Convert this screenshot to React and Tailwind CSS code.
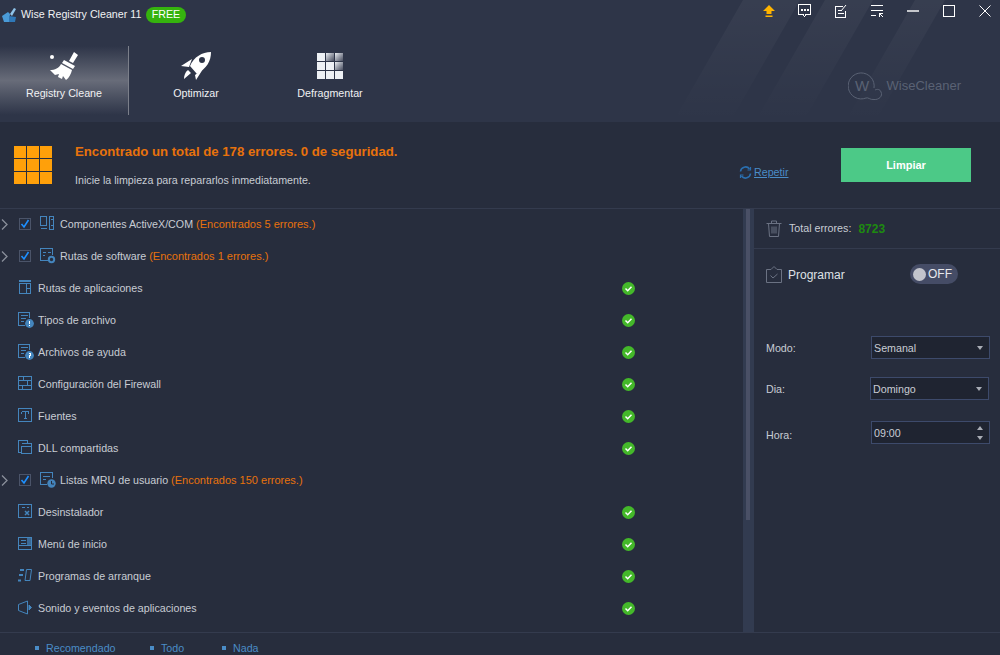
import React from 'react';

const BLUE = '#4485bd';

const Base = ({ children }) => (
  <svg width="16" height="16" viewBox="0 0 16 16" fill="none" stroke={BLUE} strokeWidth="1" shapeRendering="crispEdges">
    {children}
  </svg>
);

const Badge = ({ mark }) => (
  <>
    <circle cx="11.5" cy="11.5" r="4.4" fill={BLUE} stroke="none" shapeRendering="auto" />
    {mark === '!' && <path d="M11.5 9v3M11.5 13v1" stroke="#fff" />}
    {mark === '?' && <path d="M10.5 9.5h2v2h-1v1M11.5 13v1" stroke="#fff" />}
  </>
);

const icons = {
  activex: () => (
    <Base>
      <path d="M.5 .5h6v9h-6zM.5 12.500h6M9.500 .5h4v13h-4zM10.500 3.500h2M10.500 9.500h2" />
    </Base>
  ),
  software: () => (
    <svg width="16" height="16" viewBox="0 0 16 16" fill="none" stroke={BLUE}>
      <path d="M8 12.500H.5v-12h12V7M2.500 4.500h3M7.500 4.500h3M2.500 7.500h2" shapeRendering="crispEdges" />
      <circle cx="11.500" cy="11.500" r="2.700" strokeWidth="2" />
    </svg>
  ),
  app: () => (
    <Base>
      <path d="M1 .5h12M1 1.500h12M1.500 3.500h11v10h-11zM8.500 3.500v10M8.500 8.500h4" />
    </Base>
  ),
  file: () => (
    <Base>
      <path d="M7 13.500H.5v-13h11V6M2.500 3.500h7M2.500 6.500h5M2.500 9.500h3" />
      <Badge mark="!" />
    </Base>
  ),
  help: () => (
    <Base>
      <path d="M7 13.500H.5v-13h11V6M2.500 3.500h7M2.500 6.500h5M2.500 9.500h3" />
      <Badge mark="?" />
    </Base>
  ),
  firewall: () => (
    <Base>
      <path d="M.5 .5h13v13H.5zM.5 4.500h13M.5 9.500h13M5.500 .5v4M9.500 4.500v5M4.500 9.500v4" />
    </Base>
  ),
  font: () => (
    <Base>
      <path d="M.5 .5h13v13H.5zM3.500 3.500h7M3.500 3.500v2M10.500 3.500v2M7 3.500v7M5.500 10.500h3" />
    </Base>
  ),
  dll: () => (
    <Base>
      <path d="M.5 8V.5h9V3M3.500 3.500h10v7M3.500 6.500h10v7H3.500zM.5 8v4.500h3" />
    </Base>
  ),
  mru: () => (
    <svg width="16" height="16" viewBox="0 0 16 16" fill="none" stroke={BLUE}>
      <path d="M7 12.500H.5v-12h12V6M2.500 4.500h7M2.500 7.500h3" shapeRendering="crispEdges" />
      <circle cx="11.500" cy="11.500" r="4.200" fill={BLUE} stroke="none" />
      <path d="M11.500 9v3h2.500" stroke="#272d3d" />
    </svg>
  ),
  uninstall: () => (
    <Base>
      <path d="M.5 .5h13v13H.5zM3.500 3.500h3M8.500 3.500h2" />
      <path d="M7 7l4 4M11 7l-4 4" strokeWidth="1.500" shapeRendering="auto" />
    </Base>
  ),
  start: () => (
    <Base>
      <path d="M.5 1.500h13v12H.5zM.5 9.500h13M2.500 4.500h5M2.500 7h5" />
      <rect x="9" y="2" width="4" height="7" fill={BLUE} stroke="none" opacity="0.7" />
    </Base>
  ),
  boot: () => (
    <svg width="16" height="16" viewBox="0 0 16 16" fill="none" stroke={BLUE}>
      <path d="M2 2h4M1 7h4M0 12.500h3" strokeWidth="2" />
      <path d="M8.500 1.500h5l-1.500 11H7z" />
    </svg>
  ),
  sound: () => (
    <svg width="16" height="16" viewBox="0 0 16 16" fill="none" stroke={BLUE}>
      <path d="M.5 4.500l9-3.500v13l-9-3.500z" />
      <path d="M11 5l2.500 2.500-2.500 2.500z" fill={BLUE} />
    </svg>
  ),
};

const items = [
  { id: 'activex', label: 'Componentes ActiveX/COM', found: 5 },
  { id: 'software', label: 'Rutas de software', found: 1 },
  { id: 'app', label: 'Rutas de aplicaciones' },
  { id: 'file', label: 'Tipos de archivo' },
  { id: 'help', label: 'Archivos de ayuda' },
  { id: 'firewall', label: 'Configuración del Firewall' },
  { id: 'font', label: 'Fuentes' },
  { id: 'dll', label: 'DLL compartidas' },
  { id: 'mru', label: 'Listas MRU de usuario', found: 150 },
  { id: 'uninstall', label: 'Desinstalador' },
  { id: 'start', label: 'Menú de inicio' },
  { id: 'boot', label: 'Programas de arranque' },
  { id: 'sound', label: 'Sonido y eventos de aplicaciones' },
];

const GreenCheck = () => (
  <svg width="13" height="13" viewBox="0 0 13 13">
    <circle cx="6.500" cy="6.500" r="6.500" fill="#44b82a" />
    <path d="M3.500 6.500l2.200 2.200 3.800-4" fill="none" stroke="#fff" strokeWidth="1.500" />
  </svg>
);

const Row = ({ item }) => {
  const Icon = icons[item.id];
  if (item.found) {
    return (
      <div className="h-8 flex items-center">
        <svg width="8" height="11" viewBox="0 0 8 11" fill="none" stroke="#8a8f9b" strokeWidth="1.300" className="ml-[1px]">
          <path d="M1 .5l5 5-5 5" />
        </svg>
        <div className="ml-[10px] w-[12px] h-[12px] border border-[#4b5469] flex items-center justify-center">
          <svg width="10" height="10" viewBox="0 0 10 10">
            <path d="M1.500 5l2.500 3 4.500-7" fill="none" stroke="#1e90ff" strokeWidth="1.600" />
          </svg>
        </div>
        <div className="ml-[9px] w-[16px] flex"><Icon /></div>
        <span className="ml-[4px] text-[#c8ccd4]">{item.label}</span>
        <span className="ml-[3px] text-[11px] text-[#e8720c]">(Encontrados {item.found} errores.)</span>
      </div>
    );
  }
  return (
    <div className="h-8 flex items-center pl-[18px]">
      <div className="w-[16px] flex"><Icon /></div>
      <span className="ml-[4px] w-[584px] text-[#c8ccd4]">{item.label}</span>
      <GreenCheck />
    </div>
  );
};

const FooterLink = ({ children, className }) => (
  <span className={`flex items-center text-[#4a8cc7] ${className}`}>
    <span className="w-1 h-1 bg-[#4a8cc7] mr-[7px]" />
    {children}
  </span>
);

const Arrow = ({ up }) => (
  <svg width="6" height="4" viewBox="0 0 6 4">
    <path d={up ? 'M3 0l3 4H0z' : 'M0 0h6L3 4z'} fill="#a9adb6" />
  </svg>
);

const SelectBox = ({ label, value, className, labelClass = '', spin }) => (
  <div className={`flex items-center ${className}`}>
    <span className={`w-[105px] pt-[1px] text-[#c8ccd4] ${labelClass}`}>{label}</span>
    <div className="w-[119px] h-[23px] bg-[#1f2431] border border-[#3d4a6b] flex items-center justify-between pl-[2px] pr-[6px] text-[#c8ccd4]">
      <span className="pt-[1px]">{value}</span>
      {spin ? (
        <span className="flex flex-col gap-[6px]"><Arrow up /><Arrow /></span>
      ) : (
        <Arrow />
      )}
    </div>
  </div>
);

const WinButton = ({ children }) => (
  <div className="w-[36px] flex items-center justify-center">{children}</div>
);

export default function App() {
  return (
    <div className="w-[1000px] h-[655px] overflow-hidden bg-[#272d3d] flex flex-col text-[10.7px] font-['Liberation_Sans',sans-serif]">
      <header className="relative h-[122px] shrink-0 bg-[#2e3548] overflow-hidden">
        <svg className="absolute inset-0" width="1000" height="122" viewBox="0 0 1000 122">
          <defs>
            <linearGradient id="streak" x1="0" y1="0" x2="0" y2="1">
              <stop offset="0" stopColor="#fff" stopOpacity="0.045" />
              <stop offset="1" stopColor="#fff" stopOpacity="0" />
            </linearGradient>
          </defs>
          <path d="M743 0h57l-70 122h-57zM825 0h48l-70 122h-48zM915 0h30l-70 122h-30z" fill="url(#streak)" />
        </svg>

        <div className="relative h-[29px] flex items-center">
          <svg className="ml-[1px]" width="16" height="16" viewBox="0 0 16 16">
            <path d="M1 9l6-4 2 2-1 8H3z" fill="#4a9bd8" />
            <path d="M9 7l4-6 2 1-4 7z" fill="#8fc4ea" />
            <path d="M8 9l7 1-1 5H8z" fill="#2f78b8" />
          </svg>
          <span className="ml-[4px] w-[125px] text-[#f0f1f3]">Wise Registry Cleaner 11</span>
          <span className="h-[16px] w-[40px] rounded-full bg-[#35b30e] text-white flex items-center justify-center">FREE</span>
          <div className="ml-auto mr-[-3px] mt-[-7px] flex items-center">
            <WinButton>
              <svg width="14" height="14" viewBox="0 0 14 14">
                <path d="M7 1l6 6H9.500v3h-5V7H1zM3.500 11.500h7V13h-7z" fill="#ffb400" />
              </svg>
            </WinButton>
            <WinButton>
              <svg width="14" height="14" viewBox="0 0 14 14" fill="none" stroke="#fff" shapeRendering="crispEdges">
                <path d="M.5 .5h12v10H8l-1.500 2-1.500-2H.5z" />
                <path d="M3 5h2v2H3zM6 5h2v2H6zM9 5h2v2H9z" fill="#fff" stroke="none" />
              </svg>
            </WinButton>
            <WinButton>
              <svg width="14" height="14" viewBox="0 0 14 14" fill="none" stroke="#fff" shapeRendering="crispEdges">
                <path d="M9 2.500H1.500v11h10V7M3.500 6.500h4M3.500 9.500h6" />
                <path d="M7 7l5-6" shapeRendering="auto" />
              </svg>
            </WinButton>
            <WinButton>
              <svg width="14" height="14" viewBox="0 0 14 14" fill="none" stroke="#fff" shapeRendering="crispEdges">
                <path d="M1 1.500h12M1 6.500h12M1 11.500h5M9 9h4M9 9v4M10 10l3 3" />
              </svg>
            </WinButton>
            <WinButton><div className="w-[12px] h-[2px] bg-[#c4c6cb]" /></WinButton>
            <WinButton><div className="w-[12px] h-[12px] border border-white" /></WinButton>
            <WinButton>
              <svg width="12" height="12" viewBox="0 0 12 12" fill="none" stroke="#fff">
                <path d="M.5 .5l11 11M11.500 .5l-11 11" />
              </svg>
            </WinButton>
          </div>
        </div>

        <nav className="relative flex mt-[17px] h-[69px]">
          <div className="w-[129px] border-r border-[#7b7f8a] bg-gradient-to-b from-[#2e3548] via-[#686c79] to-[#2e3548] flex flex-col items-center pt-[5px]">
            <svg width="32" height="30" viewBox="0 0 32 30" fill="#fff">
              <circle cx="4" cy="6" r="2" />
              <path d="M26 1l4 3-5 8-4-2zM16 9l11 6-2 3-11-6zM13 13l11 6c-1 4-3 8-6 10l-3-4-1 3-4-2 1-3-4 1-5-5c5 0 9-2 11-6z" />
            </svg>
            <span className="mt-[4px] text-[#f0f1f3]">Registry Cleane</span>
          </div>
          <div className="w-[134px] flex flex-col items-center pt-[5px]">
            <svg width="32" height="30" viewBox="0 0 32 30" fill="#fff">
              <path fillRule="evenodd" d="M31 1C31 10 27 17 17 23l-7-8C14 6 22 1 31 1zM22 6a3 3 0 100 6 3 3 0 000-6z" />
              <path d="M12 8L1 15l8 1zM23 18l-8 6 1 5zM8 19l3 3-7 6c0-3 1-7 4-9z" />
            </svg>
            <span className="mt-[4px] text-[#f0f1f3]">Optimizar</span>
          </div>
          <div className="w-[134px] flex flex-col items-center pt-[5px]">
            <div className="grid grid-cols-3 gap-px w-[26px] h-[26px] mt-[2px] mb-[2px]">
              <div className="bg-[#eef1f5]" />
              <div className="bg-gradient-to-br from-[#eef1f5] to-[#4a4f60]" />
              <div className="bg-gradient-to-br from-[#eef1f5] to-[#4a4f60]" />
              <div className="bg-[#eef1f5]" />
              <div className="bg-[#eef1f5]" />
              <div className="bg-gradient-to-br from-[#eef1f5] to-[#4a4f60]" />
              <div className="bg-[#eef1f5]" />
              <div className="bg-[#eef1f5]" />
              <div className="bg-[#eef1f5]" />
            </div>
            <span className="mt-[4px] text-[#f0f1f3]">Defragmentar</span>
          </div>
          <div className="ml-auto flex items-center mr-[39px] mt-[11px]">
            <svg width="36" height="30" viewBox="0 0 36 30" fill="none" stroke="#5a6274">
              <path d="M26 17A13 13 0 1 0 18 27C20 26 22 29 26 28.500 31 29 35 25 33 21 32 18 29 18 27 19" />
              <text x="7" y="20" fontSize="15" fill="#5a6274" stroke="none">W</text>
            </svg>
            <span className="ml-[3px] text-[13px] text-[#5a6274]">WiseCleaner</span>
          </div>
        </nav>
      </header>

      <section className="h-[87px] shrink-0 border-b border-[#343b4e] flex pl-[14px]">
        <div className="mt-[24px] w-[38px] h-[38px] grid grid-cols-3 gap-px">
          {Array.from({ length: 9 }).map((_, i) => (
            <div key={i} className="bg-[#ffa00a]" />
          ))}
        </div>
        <div className="ml-[23px] mt-[20px]">
          <div className="text-[13.2px] font-bold text-[#e8720c]">Encontrado un total de 178 errores. 0 de seguridad.</div>
          <div className="mt-[10px] text-[#c8ccd4]">Inicie la limpieza para repararlos inmediatamente.</div>
        </div>
        <div className="ml-auto flex">
          <div className="mt-[43px] h-[14px] flex items-center text-[#4a8cc7]">
            <svg width="13" height="13" viewBox="0 0 13 13" fill="none" stroke="#2a6fb0" strokeWidth="1.600">
              <path d="M1.500 5.500A5 5 0 0 1 10.500 3M11.500 7.500A5 5 0 0 1 2.500 10" />
              <path d="M11.500 1v3h-3M1.500 12V9h3" strokeWidth="1.200" />
            </svg>
            <span className="ml-[2px] w-[36px] underline">Repetir</span>
          </div>
          <button className="ml-[51px] mr-[29px] mt-[26px] w-[130px] h-[34px] bg-[#4cc987] text-[11px] text-white font-bold">Limpiar</button>
        </div>
      </section>

      <main className="flex-1 min-h-0 flex">
        <div className="w-[743px] shrink-0 flex flex-col">
          <div className="h-[423px] -mt-px">
            {items.map((item) => (
              <Row key={item.id} item={item} />
            ))}
          </div>
        </div>
        <div className="w-[11px] shrink-0 h-[423px] bg-[#323b50] pl-[3px]">
          <div className="w-[4px] h-[311px] bg-[#4a5066]" />
        </div>
        <aside className="flex-1 h-[423px] pl-[12px]">
          <div className="ml-[-12px] pl-[12px] h-[40px] border-b border-[#343b4e] flex items-center">
            <svg width="16" height="17" viewBox="0 0 16 17" fill="none" stroke="#6b7283">
              <path d="M.5 3.500h15M5.500 3.500V1h5v2.500M2.500 3.500l1 13h9l1-13M6 6.500v7M8 6.500v7M10 6.500v7" />
            </svg>
            <span className="ml-[7px] text-[#c8ccd4]">Total errores:</span>
            <span className="ml-[7px] text-[12px] font-bold text-[#1e8a10]">8723</span>
          </div>
          <div className="flex items-center mt-[15px]">
            <svg width="16" height="17" viewBox="0 0 16 17" fill="none" stroke="#6b7283">
              <path d="M5 3.500H.5v13h15v-13H11M5 3.500l3-3 3 3M4.500 9.500l2.500 2.500 4.500-4" />
            </svg>
            <span className="ml-[6px] w-[122px] text-[12px] text-[#dfe1e6] pt-[1px]">Programar</span>
            <div className="w-[48px] h-[20px] rounded-full bg-[#454c66] flex items-center pl-[3px]">
              <div className="w-[13px] h-[13px] rounded-full bg-[#c2c4cc]" />
              <span className="ml-[2px] text-[12px] text-[#e6e8ec]">OFF</span>
            </div>
          </div>
          <SelectBox label="Modo:" value="Semanal" className="mt-[52px]" />
          <SelectBox label="Dia:" value="Domingo" className="mt-[18px] ml-[-1px]" labelClass="pl-[1px]" />
          <SelectBox label="Hora:" value="09:00" className="mt-[21px]" labelClass="pt-[5px]" spin />
        </aside>
      </main>

      <footer className="h-[23px] shrink-0 border-t border-[#343b4e] flex items-center pl-[35px] pt-[8px]">
        <FooterLink className="w-[115px]">Recomendado</FooterLink>
        <FooterLink className="w-[72px]">Todo</FooterLink>
        <FooterLink>Nada</FooterLink>
      </footer>
    </div>
  );
}
